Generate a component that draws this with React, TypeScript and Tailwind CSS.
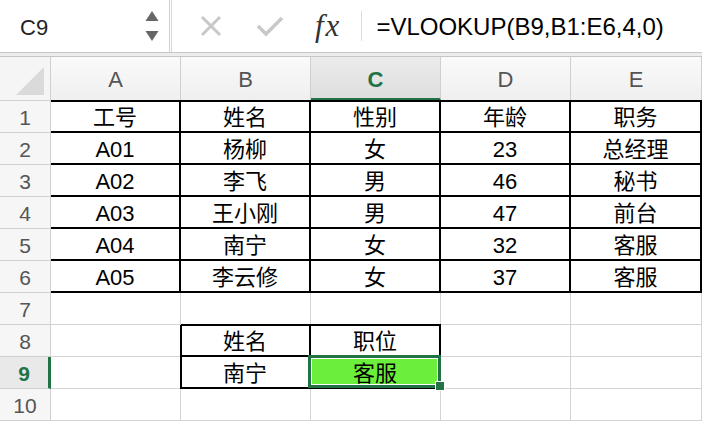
import React from 'react';

const rows: string[][] = [
  ['工号', '姓名', '性别', '年龄', '职务'],
  ['A01', '杨柳', '女', '23', '总经理'],
  ['A02', '李飞', '男', '46', '秘书'],
  ['A03', '王小刚', '男', '47', '前台'],
  ['A04', '南宁', '女', '32', '客服'],
  ['A05', '李云修', '女', '37', '客服'],
  ['', '', '', '', ''],
  ['', '姓名', '职位', '', ''],
  ['', '南宁', '客服', '', ''],
  ['', '', '', '', ''],
];

const cols = ['A', 'B', 'C', 'D', 'E'];

function cellClass(r: number, c: number) {
  const inBox = r <= 6 || ((r === 8 || r === 9) && (c === 1 || c === 2));
  let cls = inBox
    ? 'border-r-2 border-b-2 border-black'
    : 'border-r border-b border-[#d4d4d4]';
  if (r === 1) cls += ' shadow-[0_-1px_0_#000,inset_0_1px_0_#000]';
  if (r === 8 && c === 1)
    cls += ' shadow-[0_-1px_0_#000,inset_0_1px_0_#000,-1px_0_0_#000,inset_1px_0_0_#000]';
  if (r === 8 && c === 2) cls += ' shadow-[0_-1px_0_#000,inset_0_1px_0_#000]';
  if (r === 9 && c === 1) cls += ' shadow-[-1px_0_0_#000,inset_1px_0_0_#000]';
  return cls;
}

export default function App() {
  return (
    <div className="w-[702px] h-[422px] overflow-hidden bg-white font-['Liberation_Sans','Noto_Sans_CJK_SC',sans-serif]">
      {/* formula bar */}
      <div className="flex h-[52px] items-center">
        <div className="flex h-full w-[170px] items-center justify-between border-r border-[#d0d0d0] pl-5 pr-[10px]">
          <span className="pt-[2px] text-[22px] text-[#222]">C9</span>
          <svg width="14" height="34" viewBox="0 0 14 34">
            <polygon points="7,2 13.5,12 0.5,12" fill="#666" />
            <polygon points="0.5,22 13.5,22 7,32" fill="#666" />
          </svg>
        </div>
        <div className="h-full w-[2px] border-r border-[#d8d8d8]" />
        <svg className="ml-[28px]" width="22" height="22" viewBox="0 0 22 22">
          <path d="M2 2 L20 20 M20 2 L2 20" stroke="#c8c8c8" strokeWidth="3" />
        </svg>
        <svg className="ml-[34px]" width="28" height="22" viewBox="0 0 28 22">
          <polyline points="2,11 10,19 26,3" fill="none" stroke="#c8c8c8" strokeWidth="3.5" />
        </svg>
        <span className="ml-[31px] font-['Liberation_Serif',serif] text-[31px] italic tracking-[2px] text-[#333]">
          fx
        </span>
        <div className="ml-[20px] h-[30px] w-px bg-[#dcdcdc]" />
        <span className="ml-[14px] pt-[2px] text-[24px] text-black">=VLOOKUP(B9,B1:E6,4,0)</span>
      </div>
      <div className="h-[5px] border-y border-[#c6c6c6] bg-[#ededed]" />

      {/* sheet */}
      <div className="grid grid-cols-[51px_130px_130px_130px_130px_131px] grid-rows-[44px_repeat(10,32px)]">
        <div className="relative border-r border-b border-[#cfcfcf] bg-[#f5f5f5]">
          <svg className="absolute left-0 top-0" width="51" height="44" viewBox="0 0 51 44">
            <polygon points="44,10 44,38 16,38" fill="#dadada" />
          </svg>
        </div>
        {cols.map((c) =>
          c === 'C' ? (
            <div
              key={c}
              className="flex items-center justify-center border-r border-b-[3px] border-r-[#cfcfcf] border-b-[#217346] bg-gradient-to-b from-[#ececec] to-[#dedede] pt-[4px] text-[22px] font-bold text-[#217346]"
            >
              {c}
            </div>
          ) : (
            <div
              key={c}
              className="flex items-center justify-center border-r border-b border-[#cfcfcf] bg-gradient-to-b from-[#fafafa] to-[#efefef] pt-[2px] text-[22px] text-[#555]"
            >
              {c}
            </div>
          )
        )}
        {rows.map((row, i) => {
          const r = i + 1;
          return (
            <React.Fragment key={r}>
              {r === 9 ? (
                <div className="flex items-center justify-center border-b border-r-[3px] border-b-[#d0d0d0] border-r-[#217346] bg-[#e9e9e9] pt-[2px] text-[21px] font-bold text-[#217346]">
                  {r}
                </div>
              ) : (
                <div className="flex items-center justify-center border-r border-b border-[#d0d0d0] bg-[#f6f6f6] pt-[2px] text-[21px] text-[#555]">
                  {r}
                </div>
              )}
              {row.map((v, c) =>
                r === 9 && c === 2 ? (
                  <div
                    key={c}
                    className={`relative flex items-center justify-center bg-[#6bef3b] pt-[2px] text-[22px] text-black ${cellClass(r, c)}`}
                  >
                    {v}
                    <div className="absolute -left-[3px] -top-[2px] -right-[2px] -bottom-[1px] border-[3px] border-[#217346] shadow-[inset_0_0_0_1px_#fff]" />
                    <div className="absolute -right-[6px] -bottom-[4px] h-[10px] w-[10px] border border-white bg-[#217346]" />
                  </div>
                ) : (
                  <div
                    key={c}
                    className={`flex items-center justify-center pt-[2px] text-[22px] text-black ${cellClass(r, c)}`}
                  >
                    {v}
                  </div>
                )
              )}
            </React.Fragment>
          );
        })}
      </div>
    </div>
  );
}
